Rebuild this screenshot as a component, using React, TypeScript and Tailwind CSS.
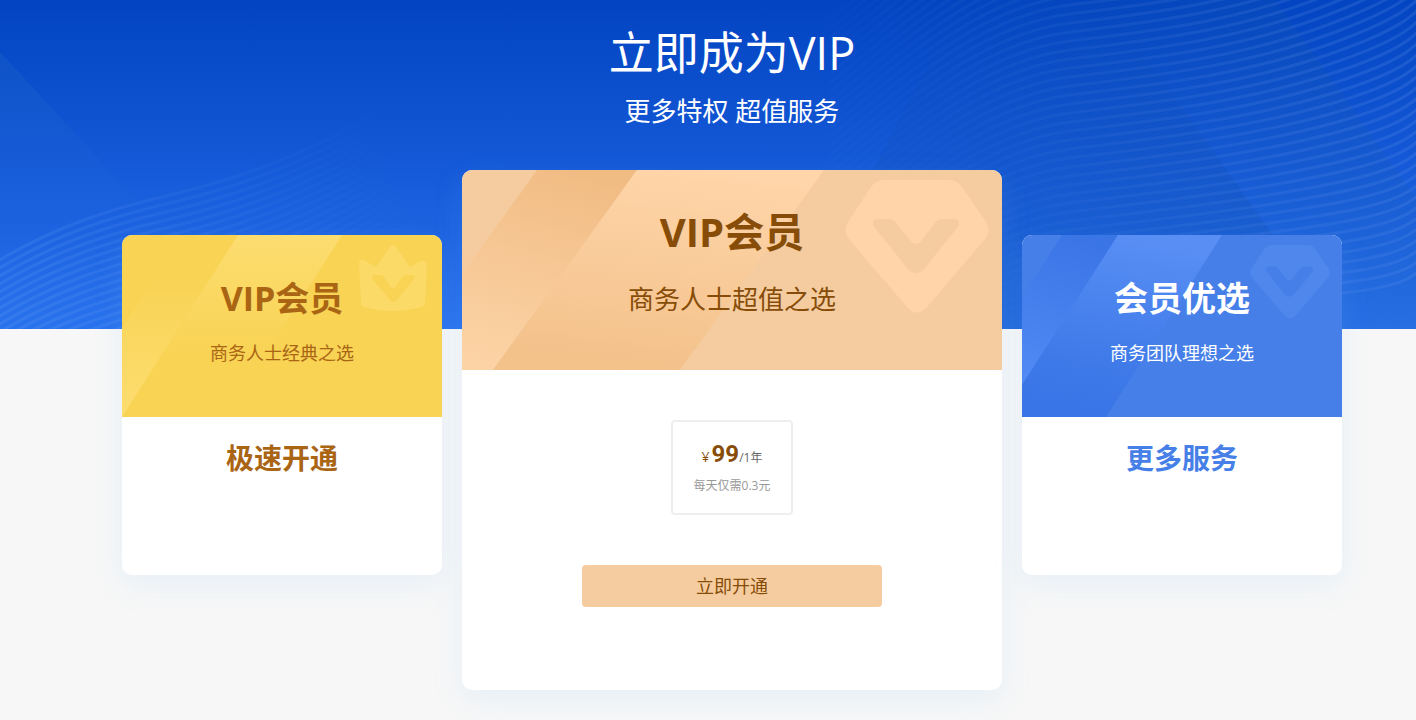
import type { ReactNode } from "react";

const range = (n: number) => Array.from({ length: n }, (_, i) => i);

function HeroBackdrop() {
  return (
    <svg
      className="absolute inset-0 h-full w-full"
      viewBox="0 0 1416 329"
      preserveAspectRatio="xMidYMin slice"
      aria-hidden="true"
    >
      <defs>
        <linearGradient id="hero-bg" x1="0" y1="0" x2="0" y2="1">
          <stop offset="0" stopColor="#0244c1" />
          <stop offset="0.5" stopColor="#1559d8" />
          <stop offset="1" stopColor="#2972ed" />
        </linearGradient>
        <linearGradient id="hero-wedge" x1="0" y1="0" x2="0" y2="1">
          <stop offset="0" stopColor="#4a90c0" stopOpacity="0.12" />
          <stop offset="0.6" stopColor="#4a90c0" stopOpacity="0" />
        </linearGradient>
        <linearGradient
          id="hero-band"
          gradientUnits="userSpaceOnUse"
          x1="1240"
          y1="0"
          x2="940"
          y2="160"
        >
          <stop offset="0" stopColor="#1a5aa0" stopOpacity="0.14" />
          <stop offset="1" stopColor="#1a5aa0" stopOpacity="0" />
        </linearGradient>
        <linearGradient id="hero-shade" x1="0" y1="0" x2="0" y2="1">
          <stop offset="0" stopColor="#0e4aa8" stopOpacity="0" />
          <stop offset="0.4" stopColor="#0e4aa8" stopOpacity="0.16" />
          <stop offset="1" stopColor="#0e4aa8" stopOpacity="0.24" />
        </linearGradient>
        <linearGradient
          id="wave-left"
          gradientUnits="userSpaceOnUse"
          x1="40"
          y1="260"
          x2="380"
          y2="120"
        >
          <stop offset="0" stopColor="#8fc0ff" stopOpacity="0.12" />
          <stop offset="1" stopColor="#8fc0ff" stopOpacity="0" />
        </linearGradient>
        <linearGradient
          id="wave-right"
          gradientUnits="userSpaceOnUse"
          x1="960"
          y1="200"
          x2="1320"
          y2="-20"
        >
          <stop offset="0" stopColor="#7fa8f0" stopOpacity="0.02" />
          <stop offset="1" stopColor="#7fa8f0" stopOpacity="0.16" />
        </linearGradient>
      </defs>
      <rect width="1416" height="329" fill="url(#hero-bg)" />
      <path d="M0 52L140 204L250 329H0Z" fill="url(#hero-wedge)" />
      <path d="M840 0H1275L1510 329H630Z" fill="url(#hero-band)" />
      <path d="M962 0H1105L1340 329H790Z" fill="url(#hero-shade)" />
      <g fill="none" stroke="url(#wave-left)" strokeWidth="3">
        {range(20).map((i) => (
          <path
            key={i}
            d={`M-10 ${266 + i * 8}C50 ${228 + i * 8} 110 ${209 + i * 8} 170 ${195 + i * 8}S290 ${160 + i * 8} 350 ${128 + i * 8}S430 ${80 + i * 8} 460 ${52 + i * 9}`}
          />
        ))}
      </g>
      <g fill="none" stroke="url(#wave-right)" strokeWidth="3">
        {range(50).map((i) => (
          <path
            key={i}
            d={`M830 ${20 + i * 9}C930 ${-63 + i * 9} 990 ${-111 + i * 9} 1070 ${-121 + i * 9}S1240 ${-140 + i * 9} 1330 ${-196 + i * 10}S1420 ${-266 + i * 11} 1450 ${-306 + i * 11}`}
          />
        ))}
      </g>
    </svg>
  );
}

function Diamond({ className }: { className: string }) {
  return (
    <svg className={className} viewBox="0 0 144 133" aria-hidden="true">
      <path
        fill="currentColor"
        fillRule="evenodd"
        d="M39 0H104Q112 0 117 7L141 42Q146 50 141 58L82 127Q72 138 62 127L3 58Q-2 50 3 42L26 7Q31 0 39 0ZM33 39Q25 40 30 48L62 88Q71 98 80 88L112 48Q117 40 109 39H97Q93 39 90 43L76 61Q71 67 66 61L51 43Q48 39 44 39Z"
      />
    </svg>
  );
}

function Crown({ className }: { className: string }) {
  return (
    <svg className={className} viewBox="0 0 68 66" aria-hidden="true">
      <path
        fill="currentColor"
        fillRule="evenodd"
        d="M31 2Q34 -2 37 2L51 22L62 16Q67 15 68 20L66 58Q66 61 62 62Q34 70 5 62Q2 61 2 58L0 19Q0 14 5 15L17 22ZM15 30Q12 31 14 35L31 55Q34 59 38 55L54 35Q57 31 54 30H46Q45 30 43 32L37 41Q34 45 31 41L25 32Q24 30 22 30Z"
      />
    </svg>
  );
}

function YellowArt() {
  return (
    <svg
      className="absolute inset-0 h-full w-full"
      viewBox="0 0 320 182"
      preserveAspectRatio="xMinYMin slice"
      aria-hidden="true"
    >
      <defs>
        <linearGradient id="y-top" x1="0" y1="0" x2="0" y2="1">
          <stop offset="0" stopColor="#fddd70" />
          <stop offset="0.65" stopColor="#fddd70" stopOpacity="0" />
        </linearGradient>
        <linearGradient id="y-bottom" x1="0" y1="0" x2="0" y2="1">
          <stop offset="0" stopColor="#fddd70" stopOpacity="0" />
          <stop offset="1" stopColor="#fddd70" />
        </linearGradient>
      </defs>
      <path d="M116 0H220L104 182H0Z" fill="url(#y-top)" />
      <path d="M33 42H89L0 182V94Z" fill="url(#y-bottom)" />
    </svg>
  );
}

function OrangeArt() {
  return (
    <svg
      className="absolute inset-0 h-full w-full"
      viewBox="0 0 540 200"
      preserveAspectRatio="xMinYMin slice"
      aria-hidden="true"
    >
      <defs>
        <linearGradient id="o-dark" x1="0.6" y1="0" x2="0.35" y2="1">
          <stop offset="0" stopColor="#f1bc84" />
          <stop offset="1" stopColor="#fcd3a5" />
        </linearGradient>
        <linearGradient id="o-light" x1="0.6" y1="0" x2="0.4" y2="1">
          <stop offset="0" stopColor="#ffd5a9" />
          <stop offset="1" stopColor="#f3c18a" />
        </linearGradient>
      </defs>
      <path d="M75 0H175L31 200H0V104Z" fill="url(#o-dark)" />
      <path d="M175 0H362L218 200H31Z" fill="url(#o-light)" />
    </svg>
  );
}

function BlueArt() {
  return (
    <svg
      className="absolute inset-0 h-full w-full"
      viewBox="0 0 320 182"
      preserveAspectRatio="xMinYMin slice"
      aria-hidden="true"
    >
      <defs>
        <linearGradient id="b-dark" x1="0.6" y1="0" x2="0.4" y2="1">
          <stop offset="0" stopColor="#3a75e6" />
          <stop offset="1" stopColor="#5089f3" />
        </linearGradient>
        <linearGradient id="b-light" x1="0.6" y1="0" x2="0.4" y2="1">
          <stop offset="0" stopColor="#598ff5" />
          <stop offset="0.75" stopColor="#3e79e8" />
          <stop offset="1" stopColor="#3975e6" />
        </linearGradient>
      </defs>
      <path d="M40 0H96L0 150V62Z" fill="url(#b-dark)" />
      <path d="M96 0H200L84 182H0V150Z" fill="url(#b-light)" />
    </svg>
  );
}

interface SideCardProps {
  title: string;
  subtitle: string;
  action: string;
  headClass: string;
  actionClass: string;
  art: ReactNode;
  badge: ReactNode;
}

function SideCard({
  title,
  subtitle,
  action,
  headClass,
  actionClass,
  art,
  badge,
}: SideCardProps) {
  return (
    <article className="mt-[65px] min-h-[340px] w-80 shrink-0 overflow-hidden rounded-[10px] bg-white shadow-[0_10px_30px_rgba(122,192,247,0.13)]">
      <header className={`relative h-[182px] pt-[39px] text-center ${headClass}`}>
        {art}
        {badge}
        <h2 className="relative text-[34px] leading-12 font-bold">{title}</h2>
        <p className="relative mt-[17px] text-lg leading-7">{subtitle}</p>
      </header>
      <p
        className={`pt-[19px] text-center text-[28px] leading-11 font-bold ${actionClass}`}
      >
        {action}
      </p>
    </article>
  );
}

export default function App() {
  return (
    <main className="min-h-screen overflow-hidden bg-[#f7f7f7] pb-[30px] font-['Open_Sans','Noto_Sans_CJK_SC',sans-serif]">
      <section className="relative h-[329px] pt-[21px] pl-12 text-center text-white">
        <HeroBackdrop />
        <h1 className="relative text-[45px] leading-16">立即成为VIP</h1>
        <p className="relative mt-2 text-[26px] leading-9">更多特权 超值服务</p>
      </section>

      <section className="relative -mt-[159px] flex items-start justify-center gap-5 pl-12">
        <SideCard
          title="VIP会员"
          subtitle="商务人士经典之选"
          action="极速开通"
          headClass="bg-[#f8d354] text-[#a96514]"
          actionClass="text-[#a96514]"
          art={<YellowArt />}
          badge={
            <Crown className="absolute top-[10px] right-[15px] w-[68px] text-[#fbda68]" />
          }
        />

        <article className="min-h-[520px] w-[540px] shrink-0 overflow-hidden rounded-[10px] bg-white text-center shadow-[0_10px_30px_rgba(122,192,247,0.13)]">
          <header className="relative h-[200px] bg-[#f5cca0] pt-[34px] text-[#874d08]">
            <OrangeArt />
            <Diamond className="absolute top-[10px] right-[13px] w-36 text-[#ffd4a8]" />
            <h2 className="relative text-[40px] leading-14 font-bold">
              VIP会员
            </h2>
            <p className="relative mt-[21px] text-[26px] leading-9">
              商务人士超值之选
            </p>
          </header>
          <div className="flex flex-col items-center gap-[50px] pt-[50px]">
            <div className="h-[95px] w-[122px] rounded border-2 border-[#eee] pt-4">
              <p className="text-xs leading-8 text-[#666]">
                <span className="mr-0.5 text-sm text-[#874d08]">¥</span>
                <strong className="font-[family-name:Roboto,sans-serif] text-2xl leading-8 font-bold text-[#874d08]">
                  99
                </strong>
                /1年
              </p>
              <p className="text-xs leading-6 text-[#999]">每天仅需0.3元</p>
            </div>
            <button
              type="button"
              className="h-[42px] w-[300px] cursor-pointer rounded bg-[#f5cca0] text-lg text-[#874d08]"
            >
              立即开通
            </button>
          </div>
        </article>

        <SideCard
          title="会员优选"
          subtitle="商务团队理想之选"
          action="更多服务"
          headClass="bg-[#467fe8] text-white"
          actionClass="text-[#467fe8]"
          art={<BlueArt />}
          badge={
            <Diamond className="absolute top-[10px] right-3 w-20 text-[#4f87ec]" />
          }
        />
      </section>
    </main>
  );
}
